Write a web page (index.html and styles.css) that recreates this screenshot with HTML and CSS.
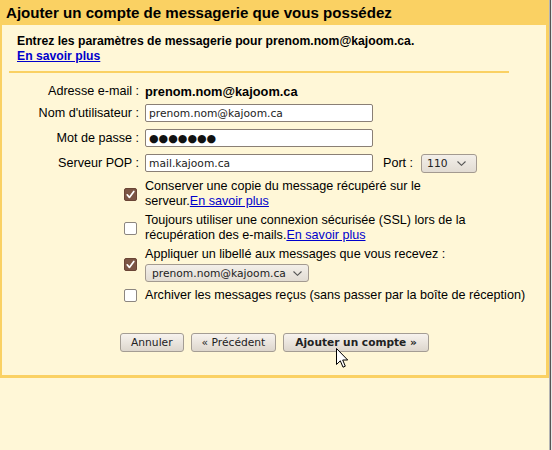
FILE: index.html
```html
<!DOCTYPE html>
<html lang="fr">
<head>
<meta charset="utf-8">
<title>Ajouter un compte de messagerie</title>
<link rel="stylesheet" href="styles.css">
</head>
<body>
<div class="window">
  <div class="main">
    <div class="panel">
      <div class="panel-title">Ajouter un compte de messagerie que vous possédez</div>
      <div class="panel-body">
        <div class="intro">
          <div>Entrez les paramètres de messagerie pour prenom.nom@kajoom.ca.</div>
          <a href="#" class="intro-link">En savoir plus</a>
        </div>
        <div class="divider"></div>

        <div class="form">
          <div class="row row-first">
            <div class="label">Adresse e-mail :</div>
            <div class="value">prenom.nom@kajoom.ca</div>
          </div>
          <div class="row">
            <div class="label">Nom d'utilisateur :</div>
            <input class="field" type="text" value="prenom.nom@kajoom.ca">
          </div>
          <div class="row">
            <div class="label">Mot de passe :</div>
            <input class="field field-pass" type="text" value="●●●●●●●">
          </div>
          <div class="row">
            <div class="label">Serveur POP :</div>
            <input class="field" type="text" value="mail.kajoom.ca">
            <span class="port-label">Port :</span>
            <span class="select select-port">
              <span class="select-text">110</span>
              <svg class="chev" width="9" height="5" viewBox="0 0 9 5"><path d="M0.5 0.5 L4.5 4.3 L8.5 0.5" fill="none" stroke="#555" stroke-width="1.1"/></svg>
            </span>
          </div>
        </div>

        <div class="options">
          <div class="opt">
            <span class="cb cb-on"><svg width="13" height="13" viewBox="0 0 13 13"><path d="M3.2 6.8 L5.4 9.4 L9.8 3.4" fill="none" stroke="#fff" stroke-width="1.7" stroke-linecap="round" stroke-linejoin="round"/></svg></span>
            <div class="opt-text">Conserver une copie du message récupéré sur le<br>serveur.<a href="#">En savoir plus</a></div>
          </div>
          <div class="opt">
            <span class="cb"></span>
            <div class="opt-text">Toujours utiliser une connexion sécurisée (SSL) lors de la<br>récupération des e-mails.<a href="#">En savoir plus</a></div>
          </div>
          <div class="opt">
            <span class="cb cb-on"><svg width="13" height="13" viewBox="0 0 13 13"><path d="M3.2 6.8 L5.4 9.4 L9.8 3.4" fill="none" stroke="#fff" stroke-width="1.7" stroke-linecap="round" stroke-linejoin="round"/></svg></span>
            <div class="opt-text">
              <div>Appliquer un libellé aux messages que vous recevez :</div>
              <span class="select select-label">
                <span class="select-text">prenom.nom@kajoom.ca</span>
                <svg class="chev" width="9" height="5" viewBox="0 0 9 5"><path d="M0.5 0.5 L4.5 4.3 L8.5 0.5" fill="none" stroke="#555" stroke-width="1.1"/></svg>
              </span>
            </div>
          </div>
          <div class="opt opt-last">
            <span class="cb"></span>
            <div class="opt-text">Archiver les messages reçus (sans passer par la boîte de réception)</div>
          </div>
        </div>

        <div class="buttons">
          <button class="btn" type="button">Annuler</button>
          <button class="btn" type="button">« Précédent</button>
          <button class="btn btn-primary" type="button">Ajouter un compte »</button>
        </div>
      </div>
    </div>
    <svg class="cursor" width="13" height="21" viewBox="0 0 13 21"><path d="M0.5 0.5 L0.5 16.5 L4.3 12.8 L7 19.2 L9.3 18.2 L6.7 12 L11.7 12 Z" fill="#fff" stroke="#000" stroke-width="1" stroke-linejoin="miter"/></svg>
  </div>
  <div class="edge"></div>
</div>
</body>
</html>
```
FILE: styles.css
```css
html, body {
  margin: 0;
  padding: 0;
}
body {
  background: #fff7d7;
  font-family: "Liberation Sans", Arial, sans-serif;
  font-size: 12.6px;
  color: #000;
}
.window {
  display: flex;
  width: 552px;
  height: 450px;
}
.main {
  position: relative;
  width: 549px;
}
.edge {
  width: 3px;
  background: linear-gradient(to right, #b5b5b5 0 1px, #555 1px 2px, #e6e6e6 2px 3px);
}
.panel {
  border-left: 2px solid #fad163;
  border-right: 3px solid #fad163;
  border-bottom: 3px solid #fad163;
  background: #fff7d7;
}
.panel-title {
  background: #fad163;
  height: 25px;
  line-height: 25px;
  padding-left: 4px;
  font-size: 15.1px;
  font-weight: bold;
}
.panel-body {
  padding: 9px 0 23px 7px;
}
.intro {
  padding-left: 8px;
  font-weight: bold;
  font-size: 12.2px;
  line-height: 15px;
}
.intro-link {
  color: #0000cc;
  text-decoration: underline;
}
.divider {
  width: 500px;
  height: 2px;
  background: #fad163;
  margin-top: 7px;
}
.form {
  padding-top: 11px;
}
.row {
  display: flex;
  align-items: center;
  height: 18px;
  margin-bottom: 7px;
}
.row-first {
  height: 15px;
  line-height: 15px;
  margin-bottom: 5px;
}
.label {
  width: 130px;
  text-align: right;
  margin-right: 6px;
  flex: none;
}
.value {
  font-weight: bold;
  font-size: 12.8px;
}
.field {
  box-sizing: border-box;
  width: 228px;
  height: 18px;
  margin: 0;
  padding: 0 3px;
  border: 1px solid #8a7f75;
  border-radius: 2px;
  background: #fff;
  font-family: "DejaVu Sans", sans-serif;
  font-size: 10.7px;
  color: #222;
  outline: none;
}
.field-pass {
  font-size: 11px;
  color: #111;
}
.port-label {
  margin-left: 10px;
  margin-right: 8px;
}
.select {
  position: relative;
  box-sizing: border-box;
  display: inline-flex;
  align-items: center;
  height: 19px;
  border: 1px solid #a39a90;
  border-radius: 3px;
  background: linear-gradient(to bottom, #f3efe9, #e2dcd3);
  font-family: "DejaVu Sans", sans-serif;
  font-size: 10.7px;
  color: #222;
}
.select-text {
  padding-left: 5px;
}
.chev {
  position: absolute;
  top: 6px;
}
.select-port {
  width: 56px;
}
.select-port .chev {
  right: 10px;
}
.select-label {
  width: 164px;
  height: 18px;
  margin-top: 2px;
}
.select-label .select-text {
  padding-left: 6px;
}
.select-label .chev {
  right: 6px;
}
.opt {
  display: flex;
  align-items: center;
  margin-left: 115px;
  margin-bottom: 4px;
}
.opt-last {
  margin-top: 6px;
}
.cb {
  box-sizing: border-box;
  width: 13px;
  height: 13px;
  flex: none;
  border: 1px solid #8c8680;
  border-radius: 2px;
  background: #fff;
  margin-right: 8px;
  display: flex;
}
.cb-on {
  background: #7b5443;
  border-color: #6a4536;
}
.cb svg {
  margin: -1px;
}
.opt-text {
  line-height: 15px;
}
.opt-text a {
  color: #0000cc;
  text-decoration: underline;
}
.buttons {
  display: flex;
  gap: 7px;
  margin-top: 30px;
  margin-left: 111px;
}
.btn {
  box-sizing: border-box;
  height: 19px;
  padding: 0 10px;
  margin: 0;
  border: 1px solid #a49d94;
  border-radius: 3px;
  background: linear-gradient(to bottom, #f7f3ee, #ddd6cd);
  font-family: "DejaVu Sans", sans-serif;
  font-size: 10.7px;
  color: #222;
  line-height: 17px;
}
.btn-primary {
  font-weight: bold;
  font-size: 10.6px;
  padding: 0 11px;
}
.cursor {
  position: absolute;
  left: 336px;
  top: 348px;
}
```
